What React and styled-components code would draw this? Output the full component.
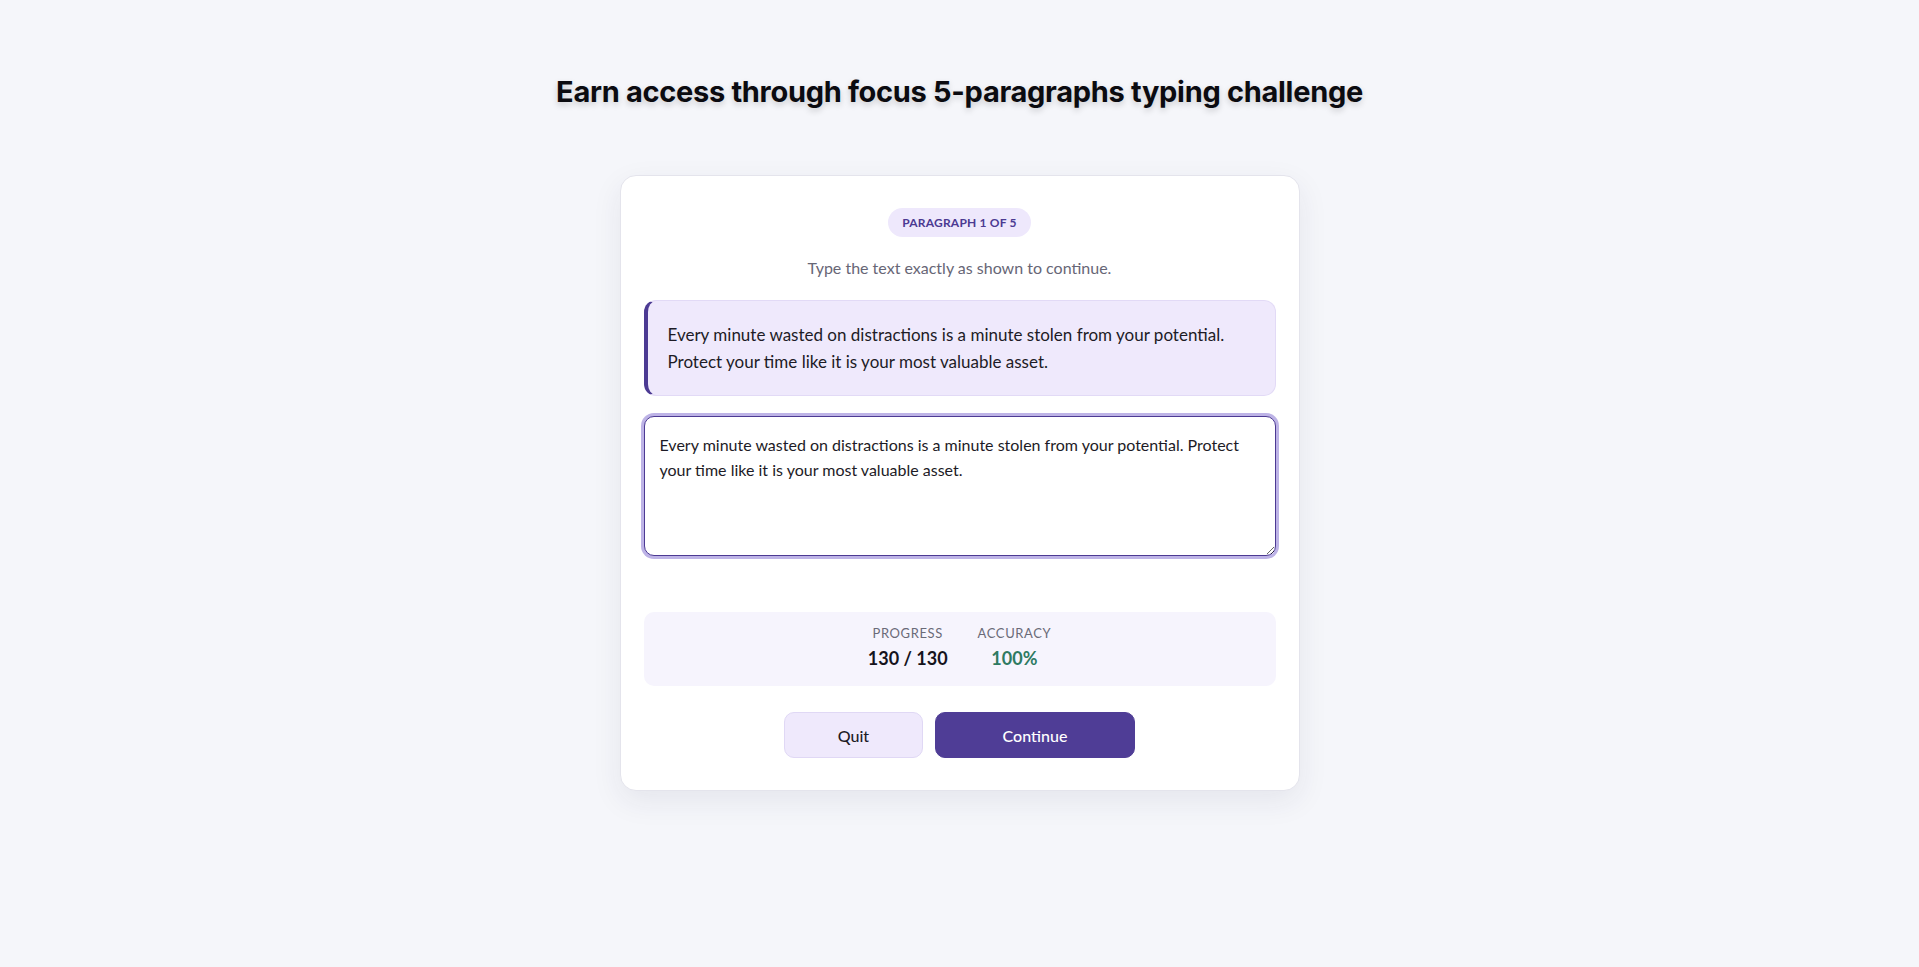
import React, { useState } from 'react';
import styled, { createGlobalStyle } from 'styled-components';

const GlobalStyle = createGlobalStyle`
  * {
    box-sizing: border-box;
  }

  body {
    margin: 0;
    background-color: #f5f6fa;
    font-family: 'Lato', 'Noto Sans', sans-serif;
    color: #1d1b26;
  }
`;

const Page = styled.main`
  min-height: 967px;
  display: flex;
  flex-direction: column;
  align-items: center;
  padding-top: 72px;
`;

const Title = styled.h1`
  margin: 0 0 63px;
  font-family: 'Inter', 'Liberation Sans', sans-serif;
  font-size: 29px;
  font-weight: 700;
  line-height: 40px;
  letter-spacing: -0.3px;
  color: #0b0b10;
  text-shadow: 0 3px 6px rgba(0, 0, 0, 0.18);
`;

const Card = styled.section`
  width: 680px;
  background-color: #ffffff;
  border: 1px solid #e4e4ec;
  border-radius: 16px;
  box-shadow: 0 10px 30px rgba(40, 40, 80, 0.08);
  padding: 32px 23px 32px;
  display: flex;
  flex-direction: column;
  align-items: center;
`;

const Badge = styled.span`
  display: inline-flex;
  align-items: center;
  height: 29px;
  padding: 0 14px;
  border-radius: 999px;
  background-color: #eee8fc;
  color: #4b3a92;
  font-size: 12px;
  font-weight: 700;
  letter-spacing: 0.2px;
`;

const Hint = styled.p`
  margin: 20px 0 21px;
  font-size: 16px;
  line-height: 22px;
  color: #676676;
`;

const Quote = styled.blockquote`
  width: 100%;
  margin: 0;
  padding: 20px;
  background-color: #efe9fc;
  border: 1px solid #e2daf6;
  border-left: 4px solid #4c3a93;
  border-radius: 12px;
  font-size: 17px;
  line-height: 27px;
  color: #1d1b26;
`;

const Input = styled.textarea`
  width: 100%;
  height: 140px;
  margin-top: 20px;
  padding: 15px 15px;
  border: 1px solid #4c3a93;
  border-radius: 10px;
  box-shadow: 0 0 0 3px #bdb3e6;
  outline: none;
  resize: vertical;
  font-family: 'Lato', 'Noto Sans', sans-serif;
  font-size: 16px;
  line-height: 25px;
  color: #1d1b26;
  background-color: #ffffff;
`;

const Stats = styled.div`
  width: 100%;
  margin-top: 56px;
  padding: 13px 0 15px;
  display: flex;
  justify-content: center;
  gap: 30px;
  background-color: #f6f4fd;
  border-radius: 10px;
`;

const Stat = styled.div`
  display: flex;
  flex-direction: column;
  align-items: center;
  gap: 4px;
`;

const StatLabel = styled.span`
  font-size: 13px;
  font-weight: 400;
  line-height: 16px;
  letter-spacing: 0.6px;
  color: #6a6a78;
`;

const StatValue = styled.span`
  font-size: 18px;
  line-height: 26px;
  font-weight: 700;
  color: ${(p) => (p.$good ? '#2e7a62' : '#15131c')};
`;

const Actions = styled.div`
  margin-top: 26px;
  display: flex;
  gap: 12px;
`;

const Button = styled.button`
  height: 46px;
  padding: 0;
  width: ${(p) => (p.$primary ? '200px' : '139px')};
  border-radius: 10px;
  border: 1px solid ${(p) => (p.$primary ? '#4f3d96' : '#e0d8f5')};
  background-color: ${(p) => (p.$primary ? '#4f3d96' : '#efe9fc')};
  color: ${(p) => (p.$primary ? '#ffffff' : '#1d1b26')};
  font-family: 'Lato', 'Noto Sans', sans-serif;
  font-size: 16px;
  font-weight: 500;
  cursor: pointer;
`;

const PARAGRAPH =
  'Every minute wasted on distractions is a minute stolen from your potential. Protect your time like it is your most valuable asset.';

const App = () => {
  const [typed, setTyped] = useState(PARAGRAPH);

  let correct = 0;
  for (let i = 0; i < typed.length; i++) {
    if (typed[i] === PARAGRAPH[i]) correct++;
  }
  const accuracy = typed.length ? Math.round((correct / typed.length) * 100) : 100;

  return (
    <>
      <GlobalStyle />
      <Page>
        <Title>Earn access through focus 5-paragraphs typing challenge</Title>
        <Card>
          <Badge>PARAGRAPH 1 OF 5</Badge>
          <Hint>Type the text exactly as shown to continue.</Hint>
          <Quote>
            Every minute wasted on distractions is a minute stolen from your potential.
            <br />
            Protect your time like it is your most valuable asset.
          </Quote>
          <Input value={typed} onChange={(e) => setTyped(e.target.value)} spellCheck={false} />
          <Stats>
            <Stat>
              <StatLabel>PROGRESS</StatLabel>
              <StatValue>
                {typed.length} / {PARAGRAPH.length}
              </StatValue>
            </Stat>
            <Stat>
              <StatLabel>ACCURACY</StatLabel>
              <StatValue $good>{accuracy}%</StatValue>
            </Stat>
          </Stats>
          <Actions>
            <Button>Quit</Button>
            <Button $primary>Continue</Button>
          </Actions>
        </Card>
      </Page>
    </>
  );
};

export default App;
